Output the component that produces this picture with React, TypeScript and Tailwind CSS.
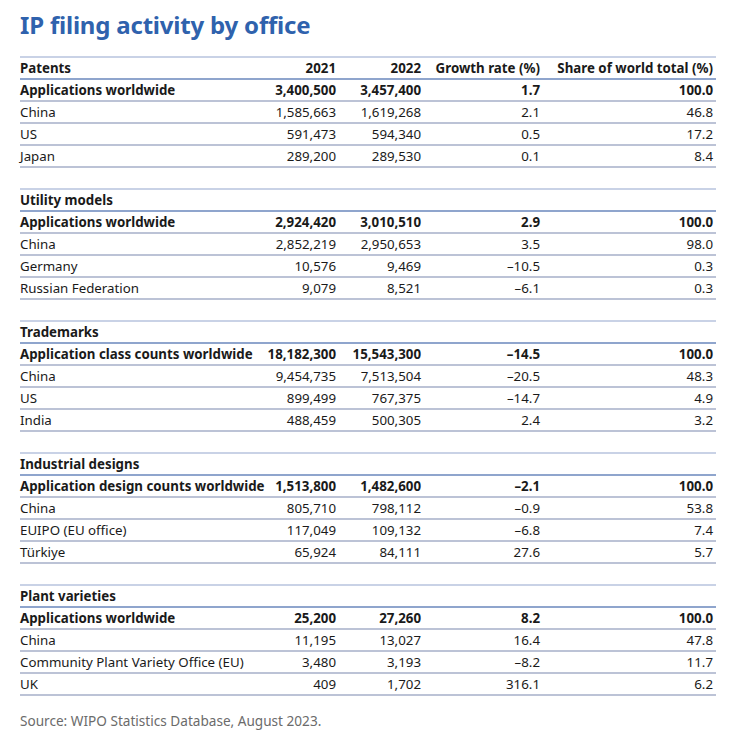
const sections = [
  {
    name: 'Patents',
    total: ['Applications worldwide', '3,400,500', '3,457,400', '1.7', '100.0'],
    rows: [
      ['China', '1,585,663', '1,619,268', '2.1', '46.8'],
      ['US', '591,473', '594,340', '0.5', '17.2'],
      ['Japan', '289,200', '289,530', '0.1', '8.4'],
    ],
  },
  {
    name: 'Utility models',
    total: ['Applications worldwide', '2,924,420', '3,010,510', '2.9', '100.0'],
    rows: [
      ['China', '2,852,219', '2,950,653', '3.5', '98.0'],
      ['Germany', '10,576', '9,469', '–10.5', '0.3'],
      ['Russian Federation', '9,079', '8,521', '–6.1', '0.3'],
    ],
  },
  {
    name: 'Trademarks',
    total: ['Application class counts worldwide', '18,182,300', '15,543,300', '–14.5', '100.0'],
    rows: [
      ['China', '9,454,735', '7,513,504', '–20.5', '48.3'],
      ['US', '899,499', '767,375', '–14.7', '4.9'],
      ['India', '488,459', '500,305', '2.4', '3.2'],
    ],
  },
  {
    name: 'Industrial designs',
    total: ['Application design counts worldwide', '1,513,800', '1,482,600', '–2.1', '100.0'],
    rows: [
      ['China', '805,710', '798,112', '–0.9', '53.8'],
      ['EUIPO (EU office)', '117,049', '109,132', '–6.8', '7.4'],
      ['Türkiye', '65,924', '84,111', '27.6', '5.7'],
    ],
  },
  {
    name: 'Plant varieties',
    total: ['Applications worldwide', '25,200', '27,260', '8.2', '100.0'],
    rows: [
      ['China', '11,195', '13,027', '16.4', '47.8'],
      ['Community Plant Variety Office (EU)', '3,480', '3,193', '–8.2', '11.7'],
      ['UK', '409', '1,702', '316.1', '6.2'],
    ],
  },
]

// label | 2021 | 2022 | growth | share | pad
const grid = 'grid grid-cols-[236px_80px_85px_119px_173px_3px] items-center h-[20px] leading-[20px]'

function Row({ cells, bold, line }: { cells: string[]; bold?: boolean; line: string }) {
  return (
    <div className={`${grid} box-content border-b-2 ${line} ${bold ? 'font-bold' : ''}`}>
      <span className="whitespace-nowrap">{cells[0]}</span>
      {cells.slice(1).map((c, i) => (
        <span key={i} className="text-right whitespace-nowrap">{c}</span>
      ))}
      <span />
    </div>
  )
}

export default function App() {
  return (
    <div
      className="w-[742px] h-[744px] bg-white px-5 text-[13.3px] text-[#1a1a1a]"
      style={{ fontFamily: '"Noto Sans", "Open Sans", sans-serif' }}
    >
      <div className="w-[696px]">
        <h1 className="pt-[9px] h-[40px] text-[24px] leading-[32px] font-bold text-[#2f62ad] tracking-[-0.2px]">
          IP filing activity by office
        </h1>
        <div className="mt-[16px] flex flex-col gap-[20px]">
          {sections.map((s, si) => (
            <div key={s.name} className="border-t-2 border-[#c9d2e6]">
              <Row
                cells={si === 0 ? [s.name, '2021', '2022', 'Growth rate (%)', 'Share of world total (%)'] : [s.name, '', '', '', '']}
                bold
                line="border-[#8fa5cd]"
              />
              <Row cells={s.total} bold line="border-[#bcc3d6]" />
              {s.rows.map((r) => (
                <Row key={r[0]} cells={r} line="border-[#bcc3d6]" />
              ))}
            </div>
          ))}
        </div>
        <p className="mt-[15px] leading-[20px] text-[13.6px] text-[#6b6b6b]">
          Source: WIPO Statistics Database, August 2023.
        </p>
      </div>
    </div>
  )
}
